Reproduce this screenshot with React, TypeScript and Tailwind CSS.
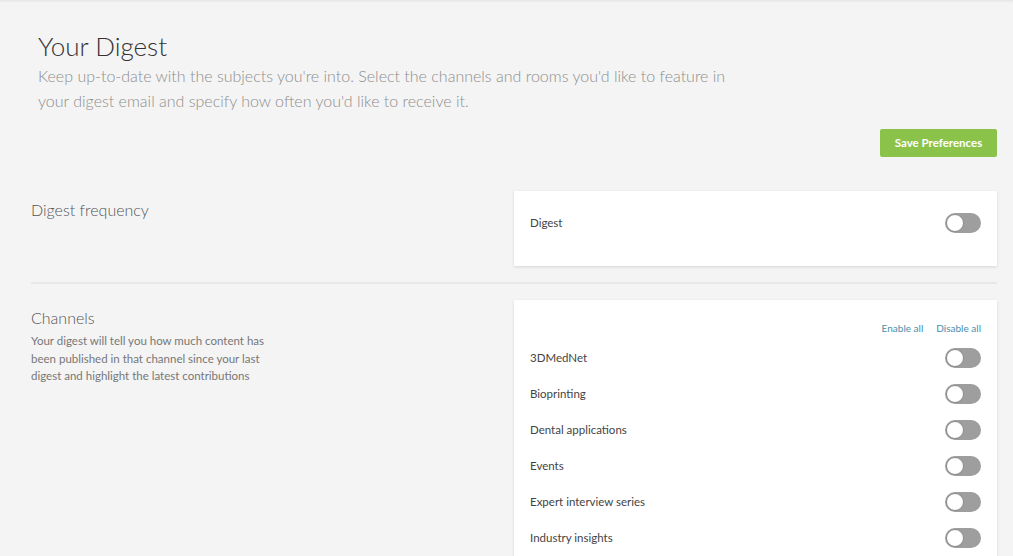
import React from "react";

function Toggle() {
  return (
    <div className="relative w-[36px] h-[20px] rounded-full bg-[#9e9e9e] shrink-0">
      <div className="absolute left-[1px] top-[1px] w-[18px] h-[18px] rounded-full bg-white border border-[#8a8a8a]" />
    </div>
  );
}

const channels = [
  "3DMedNet",
  "Bioprinting",
  "Dental applications",
  "Events",
  "Expert interview series",
  "Industry insights",
];

export default function App() {
  return (
    <div
      className="min-h-[556px] bg-[#f4f4f4] shadow-[inset_0_3px_3px_-2px_rgba(0,0,0,0.08)] overflow-hidden"
      style={{ fontFamily: "Lato, 'Open Sans', sans-serif" }}
    >
      <div className="pt-[30px] pl-[38px] pr-[16px]">
        <h1 className="text-[26px] leading-[32px] font-light text-[#333]">Your Digest</h1>
        <p className="mt-[1px] text-[16px] leading-[25px] font-light text-[#8e8e8e] max-w-[700px]">
          Keep up-to-date with the subjects you're into. Select the channels and rooms you'd like to feature in your digest email and specify how often you'd like to receive it.
        </p>
      </div>
      <div className="flex justify-end pr-[16px] mt-[16px]">
        <button className="w-[117px] h-[28px] rounded-[2px] bg-[#8bc34a] text-white text-[11.5px] font-bold">
          Save Preferences
        </button>
      </div>
      <div className="pl-[31px] pr-[16px] mt-[34px]">
        <div className="flex">
          <div className="flex-1 pt-[9px]">
            <h2 className="text-[16px] leading-[20px] font-light text-[#555]">Digest frequency</h2>
          </div>
          <div className="w-[483px] bg-white shadow-[0_1px_3px_rgba(0,0,0,0.12)] pl-[16px] pr-[16px] pt-[22px] pb-[33px]">
            <div className="flex items-center justify-between h-[20px]">
              <span className="text-[11.5px] text-[#444] -mt-[1px]">Digest</span>
              <Toggle />
            </div>
          </div>
        </div>
        <div className="h-[2px] bg-[#e8e8e8] mt-[16px] mb-[16px]" />
        <div className="flex">
          <div className="flex-1 pt-[8px]">
            <h2 className="text-[16px] leading-[20px] font-light text-[#555]">Channels</h2>
            <p className="mt-[4px] text-[11.5px] leading-[17.5px] text-[#777] max-w-[236px]">
              Your digest will tell you how much content has been published in that channel since your last digest and highlight the latest contributions
            </p>
          </div>
          <div className="w-[483px] bg-white shadow-[0_1px_3px_rgba(0,0,0,0.12)] pl-[16px] pr-[16px] pt-[21px] pb-[16px]">
            <div className="flex justify-end gap-[13px] text-[10px] leading-[14px] text-[#4a8eab]">
              <span>Enable all</span>
              <span>Disable all</span>
            </div>
            <div className="mt-[13px]">
              {channels.map((c) => (
                <div key={c} className="flex items-center justify-between h-[20px] mb-[16px]">
                  <span className="text-[11.5px] text-[#444] -mt-[1px]">{c}</span>
                  <Toggle />
                </div>
              ))}
            </div>
          </div>
        </div>
      </div>
    </div>
  );
}
